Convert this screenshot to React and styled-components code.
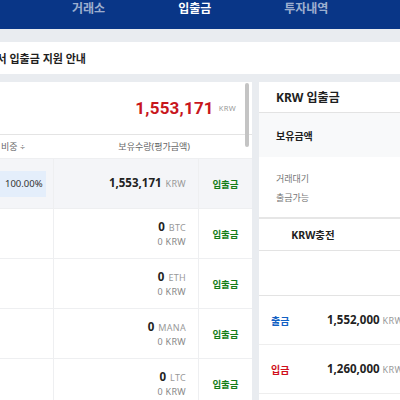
import React from 'react';
import styled, { createGlobalStyle } from 'styled-components';

const Global = createGlobalStyle`
  html, body { margin: 0; padding: 0; background: #e9ecf0; overflow: hidden; }
  body { font-family: "Noto Sans", "Noto Sans CJK KR", sans-serif; }
  * { box-sizing: border-box; }
`;

const Page = styled.div`
  width: 400px;
  height: 400px;
  overflow: hidden;
  display: flex;
  flex-direction: column;
  background: #e9ecf0;
`;

const Nav = styled.nav`
  height: 29px;
  flex: none;
  background: #093687;
  display: flex;
  align-items: flex-start;
  gap: 73px;
  padding-left: 72px;
  padding-top: 1px;
`;

const NavItem = styled.span`
  font-size: 12px;
  font-weight: 700;
  line-height: 16px;
  color: ${p => (p.$active ? '#ffffff' : 'rgba(255,255,255,0.62)')};
  white-space: nowrap;
`;

const Notice = styled.div`
  margin-top: 13px;
  height: 32px;
  flex: none;
  background: #fff;
  display: flex;
  align-items: center;
`;

const NoticeText = styled.div`
  width: 86px;
  display: flex;
  justify-content: flex-end;
  white-space: nowrap;
  font-size: 11px;
  font-weight: 700;
  color: #1e1e1e;
`;

const Main = styled.div`
  margin-top: 8px;
  display: flex;
  gap: 7px;
  flex: 1;
  min-height: 0;
`;

const LeftPanel = styled.section`
  position: relative;
  margin-left: -100px;
  width: 352px;
  flex: none;
  background: #fff;
  display: flex;
  flex-direction: column;
  overflow: hidden;
  & > * { flex: none; }
`;

const Thumb = styled.div`
  position: absolute;
  right: 3px;
  top: 1px;
  width: 4px;
  height: 64px;
  border-radius: 2px;
  background: #c4c4c4;
`;

const TotalBox = styled.div`
  height: 53px;
  border-bottom: 1px solid #e4e4e4;
  display: flex;
  align-items: center;
  justify-content: flex-end;
  padding-right: 16px;
  padding-bottom: 1px;
  gap: 5px;
`;

const TotalNum = styled.span`
  font-family: Roboto, "Noto Sans", sans-serif;
  font-size: 17px;
  font-weight: 700;
  color: #c8161d;
  letter-spacing: 0.2px;
`;

const Unit = styled.span`
  font-family: "Noto Sans", sans-serif;
  font-size: ${p => p.$size || 8}px;
  color: #999;
  font-weight: 400;
  letter-spacing: 0.3px;
  margin-left: ${p => p.$gap || 0}px;
`;

const Grid = styled.div`
  display: grid;
  grid-template-columns: 100px 53px 145px 54px;
  align-items: center;
`;

const HeadRow = styled(Grid)`
  height: 23px;
  font-size: 9px;
  color: #666;
`;

const HeadCell = styled.div`
  text-align: ${p => p.$align || 'left'};
  padding-right: ${p => p.$pr || 0}px;
  padding-left: ${p => p.$pl || 0}px;
  white-space: nowrap;
`;

const Row = styled(Grid)`
  height: 50px;
  border-top: 1px solid #eeeff1;
  background: ${p => (p.$sel ? '#f4f5f8' : '#fff')};
  align-items: stretch;
`;

const Cell = styled.div`
  display: flex;
  flex-direction: column;
  justify-content: center;
  align-items: ${p => p.$align || 'flex-start'};
  border-left: ${p => (p.$line ? '1px solid #eeeff1' : 'none')};
  padding-right: ${p => p.$pr || 0}px;
`;

const Ratio = styled.div`
  width: 46px;
  height: 26px;
  background: #e4eefb;
  display: flex;
  align-items: center;
  padding-left: 5px;
  font-size: 9.5px;
  color: #333;
  font-family: "Noto Sans", sans-serif;
`;

const Amount = styled.div`
  font-family: "Noto Sans", sans-serif;
  font-size: 11.5px;
  font-weight: 700;
  color: #222;
  line-height: 14px;
  white-space: nowrap;
`;

const SubAmount = styled.div`
  font-family: "Noto Sans", sans-serif;
  font-size: 9px;
  color: #888;
  line-height: 13px;
  letter-spacing: 0.3px;
  white-space: nowrap;
`;

const Action = styled.span`
  font-size: 9.5px;
  font-weight: 700;
  color: #127d17;
`;

const RightPanel = styled.section`
  width: 170px;
  flex: none;
  background: #fff;
  display: flex;
  flex-direction: column;
  overflow: hidden;
  & > * { flex: none; }
`;

const RTitle = styled.div`
  height: 31px;
  border-bottom: 1px solid #e3e3e3;
  display: flex;
  align-items: center;
  padding-left: 17px;
  font-size: 12px;
  font-weight: 700;
  color: #1e1e1e;
`;

const Holding = styled.div`
  height: 44px;
  background: #f8f9fa;
  display: flex;
  align-items: center;
  padding-left: 17px;
  font-size: 10px;
  font-weight: 700;
  color: #1e1e1e;
`;

const Info = styled.div`
  height: 60px;
  padding: 12px 0 0 17px;
  display: flex;
  flex-direction: column;
`;

const InfoLine = styled.div`
  height: 19px;
  line-height: 19px;
  font-size: 9px;
  color: #777;
`;

const Tabs = styled.div`
  height: 34px;
  border-top: 2px solid #e6e6e6;
  border-bottom: 1px solid #e3e3e3;
  display: flex;
`;

const Tab = styled.div`
  width: 108px;
  display: flex;
  align-items: center;
  justify-content: center;
  font-size: 10.5px;
  font-weight: 700;
  color: #1e1e1e;
`;

const Blank = styled.div`
  height: 45px;
  border-bottom: 1px solid #e3e3e3;
`;

const HistRow = styled.div`
  height: 49px;
  border-bottom: 1px solid #eeeeee;
  display: flex;
  align-items: center;
  padding-left: 12px;
`;

const HistType = styled.span`
  width: 56px;
  font-size: 10px;
  font-weight: 700;
  color: ${p => (p.$kind === 'out' ? '#1261c4' : '#d0101b')};
`;

const coins = ['BTC', 'ETH', 'MANA', 'LTC'];

export default function App() {
  return (
    <Page>
      <Global />
      <Nav>
        <NavItem>거래소</NavItem>
        <NavItem $active>입출금</NavItem>
        <NavItem>투자내역</NavItem>
      </Nav>
      <Notice>
        <NoticeText>트래블룰 시행 관련 해외 거래소에서 입출금 지원 안내</NoticeText>
      </Notice>
      <Main>
        <LeftPanel>
          <Thumb />
          <TotalBox>
            <TotalNum>1,553,171</TotalNum>
            <Unit $size={7.5}>KRW</Unit>
          </TotalBox>
          <HeadRow>
            <HeadCell>코인명</HeadCell>
            <HeadCell $pl={1}>비중 ÷</HeadCell>
            <HeadCell $align="right" $pr={8}>보유수량(평가금액)</HeadCell>
            <HeadCell />
          </HeadRow>
          <Row $sel>
            <Cell />
            <Cell><Ratio>100.00%</Ratio></Cell>
            <Cell $line $align="flex-end" $pr={12}>
              <Amount>1,553,171<Unit $size={9} $gap={4}>KRW</Unit></Amount>
            </Cell>
            <Cell $line $align="center"><Action>입출금</Action></Cell>
          </Row>
          {coins.map(c => (
            <Row key={c}>
              <Cell />
              <Cell />
              <Cell $line $align="flex-end" $pr={12}>
                <Amount>0<Unit $size={9} $gap={4}>{c}</Unit></Amount>
                <SubAmount>0 KRW</SubAmount>
              </Cell>
              <Cell $line $align="center"><Action>입출금</Action></Cell>
            </Row>
          ))}
        </LeftPanel>
        <RightPanel>
          <RTitle>KRW 입출금</RTitle>
          <Holding>보유금액</Holding>
          <Info>
            <InfoLine>거래대기</InfoLine>
            <InfoLine>출금가능</InfoLine>
          </Info>
          <Tabs>
            <Tab>KRW충전</Tab>
          </Tabs>
          <Blank />
          <HistRow>
            <HistType $kind="out">출금</HistType>
            <Amount>1,552,000<Unit $size={9} $gap={3}>KRW</Unit></Amount>
          </HistRow>
          <HistRow>
            <HistType $kind="in">입금</HistType>
            <Amount>1,260,000<Unit $size={9} $gap={3}>KRW</Unit></Amount>
          </HistRow>
        </RightPanel>
      </Main>
    </Page>
  );
}
